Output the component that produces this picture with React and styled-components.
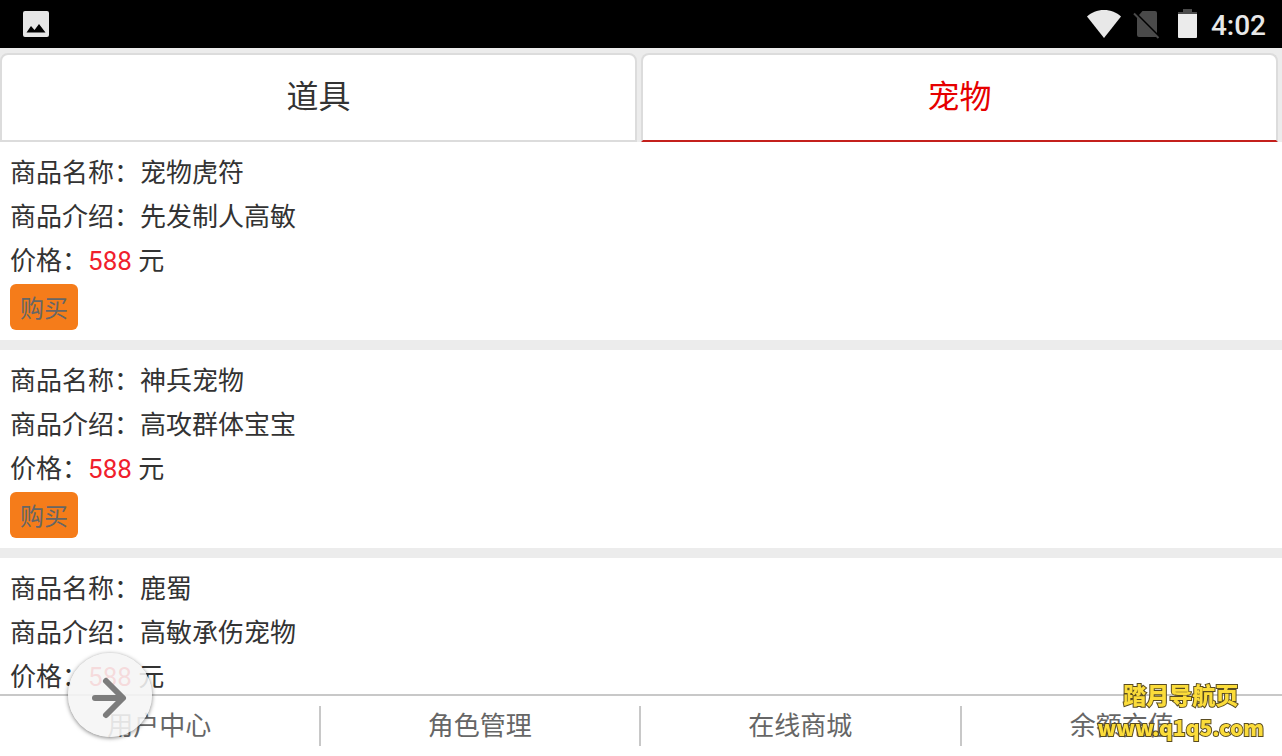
import React, { useState } from 'react';
import styled, { createGlobalStyle } from 'styled-components';

const GlobalStyle = createGlobalStyle`
  *, *::before, *::after { box-sizing: border-box; }
  body {
    margin: 0;
    background: #fff;
    color: #333;
    font-family: Roboto, "Noto Sans CJK SC", sans-serif;
    font-size: 26px;
  }
  button { font-family: inherit; cursor: pointer; }
`;

const Screen = styled.div`
  display: flex;
  flex-direction: column;
  height: 100vh;
  overflow: hidden;
`;

const StatusBar = styled.header`
  flex: none;
  display: flex;
  align-items: center;
  justify-content: space-between;
  height: 48px;
  padding: 0 16px 0 20px;
  background: #000;
  color: #e8e8e8;
`;

const StatusIcons = styled.div`
  display: flex;
  align-items: center;
`;

const StatusIcon = styled.svg`
  display: block;
  width: ${(p) => p.$width}px;
  height: 32px;
`;

const Clock = styled.time`
  margin-left: 7px;
  padding-top: 4px;
  font-size: 28px;
  font-weight: 500;
  line-height: 44px;
`;

const Tabs = styled.div`
  flex: none;
  display: grid;
  grid-template-columns: 1fr 1fr;
  gap: 4px;
  padding: 5px 4px 0 0;
  background: #ececec;
`;

const Tab = styled.button`
  height: 89px;
  padding: 0 0 8px;
  border: 2px solid #dcdcdc;
  border-bottom-color: ${(p) => (p.$active ? '#c4201c' : '#dcdcdc')};
  border-radius: 8px 8px 0 0;
  background: #fff;
  color: ${(p) => (p.$active ? '#e60000' : '#333')};
  font-size: 32px;
`;

const ProductList = styled.main`
  flex: 1;
  min-height: 0;
  overflow-y: auto;
  scrollbar-width: none;
`;

const Product = styled.article`
  padding: 9px 10px 10px;
  border-bottom: 10px solid #ececec;
`;

const Line = styled.p`
  margin: 0;
  line-height: 44px;
`;

const Price = styled.span`
  color: #f0202c;
`;

const BuyButton = styled.button`
  display: block;
  height: 46px;
  margin-top: 1px;
  padding: 0 10px 2px;
  border: 0;
  border-radius: 6px;
  background: #f57c1a;
  color: #666;
  font-size: 24px;
`;

const BottomNav = styled.nav`
  flex: none;
  display: grid;
  grid-template-columns: repeat(4, 1fr);
  padding: 10px 0;
  border-top: 2px solid #c8c8c8;
  background: #fff;
`;

const NavLink = styled.a`
  height: 40px;
  border-right: 2px solid #c8c8c8;
  color: #666;
  line-height: 40px;
  text-align: center;
  text-decoration: none;
  &:last-child { border-right: 0; }
`;

const FloatingButton = styled.button`
  position: fixed;
  left: 68px;
  bottom: 19px;
  width: 84px;
  height: 84px;
  padding: 0;
  border: 0;
  border-radius: 50%;
  background: rgba(245, 245, 245, 0.88);
  box-shadow: 0 1px 4px rgba(0, 0, 0, 0.5);
  svg { display: block; width: 84px; height: 84px; }
`;

const Watermark = styled.div`
  position: fixed;
  right: 18px;
  bottom: 12px;
  display: flex;
  flex-direction: column;
  align-items: center;
  color: #fbdc3a;
  font-family: "Noto Sans CJK SC", sans-serif;
  font-size: 23px;
  font-weight: 900;
  line-height: 33px;
  -webkit-text-stroke: 2px #5a4c20;
  paint-order: stroke fill;
  pointer-events: none;
`;

const SiteAddress = styled.span`
  font-size: 21px;
`;

const products = [
  { name: '宠物虎符', intro: '先发制人高敏', price: 588 },
  { name: '神兵宠物', intro: '高攻群体宝宝', price: 588 },
  { name: '鹿蜀', intro: '高敏承伤宠物', price: 588 },
];

const tabs = ['道具', '宠物'];
const links = ['用户中心', '角色管理', '在线商城', '余额充值'];

export default function App() {
  const [active, setActive] = useState('宠物');
  return (
    <Screen>
      <GlobalStyle />
      <StatusBar>
        <StatusIcon $width={32} viewBox="0 0 32 32" aria-hidden="true">
          <path
            fill="#e6e6e6"
            fillRule="evenodd"
            d="M5 3H27a2 2 0 0 1 2 2V27a2 2 0 0 1-2 2H5a2 2 0 0 1-2-2V5a2 2 0 0 1 2-2ZM6.500 24.500H25.500L19 16 14.500 22 11 18Z"
          />
        </StatusIcon>
        <StatusIcons>
          <StatusIcon $width={36} viewBox="0 0 36 32" aria-hidden="true">
            <path fill="#e8e8e8" d="M18 30 1 8.500C5.500 4.500 11 2 18 2s12.500 2.500 17 6.500Z" />
          </StatusIcon>
          <StatusIcon $width={50} viewBox="0 0 50 32" aria-hidden="true">
            <path fill="#4a4a4a" d="M20.500 3H33a2 2 0 0 1 2 2V25L17 7ZM15 9 34.500 28.500Q34 29 33 29H17a2 2 0 0 1-2-2Z" />
            <path stroke="#4a4a4a" strokeWidth="2" d="M12 5.500 36.500 30" />
          </StatusIcon>
          <StatusIcon $width={32} viewBox="0 0 32 32" aria-hidden="true">
            <path fill="#4a4a4a" d="M11 1H20V4H25V7H6V4H11Z" />
            <path fill="#ebebeb" d="M6 6H25V29a1 1 0 0 1-1 1H7a1 1 0 0 1-1-1Z" />
          </StatusIcon>
          <Clock>4:02</Clock>
        </StatusIcons>
      </StatusBar>

      <Tabs role="tablist">
        {tabs.map((t) => (
          <Tab
            key={t}
            type="button"
            role="tab"
            aria-selected={t === active}
            $active={t === active}
            onClick={() => setActive(t)}
          >
            {t}
          </Tab>
        ))}
      </Tabs>

      <ProductList>
        {products.map((p) => (
          <Product key={p.name}>
            <Line>商品名称：{p.name}</Line>
            <Line>商品介绍：{p.intro}</Line>
            <Line>
              价格：<Price>{p.price}</Price> 元
            </Line>
            <BuyButton type="button">购买</BuyButton>
          </Product>
        ))}
      </ProductList>

      <BottomNav>
        {links.map((l) => (
          <NavLink key={l} href="#">
            {l}
          </NavLink>
        ))}
      </BottomNav>

      <FloatingButton type="button" aria-label="前进">
        <svg viewBox="0 0 84 84" fill="none" stroke="#7c7c7c" strokeWidth="6" aria-hidden="true">
          <path d="M27 45H54" strokeLinecap="round" />
          <path d="M38 28 55 45 38 62" strokeLinecap="round" strokeLinejoin="round" />
        </svg>
      </FloatingButton>

      <Watermark>
        <span>踏月导航页</span>
        <SiteAddress>www.q1q5.com</SiteAddress>
      </Watermark>
    </Screen>
  );
}
